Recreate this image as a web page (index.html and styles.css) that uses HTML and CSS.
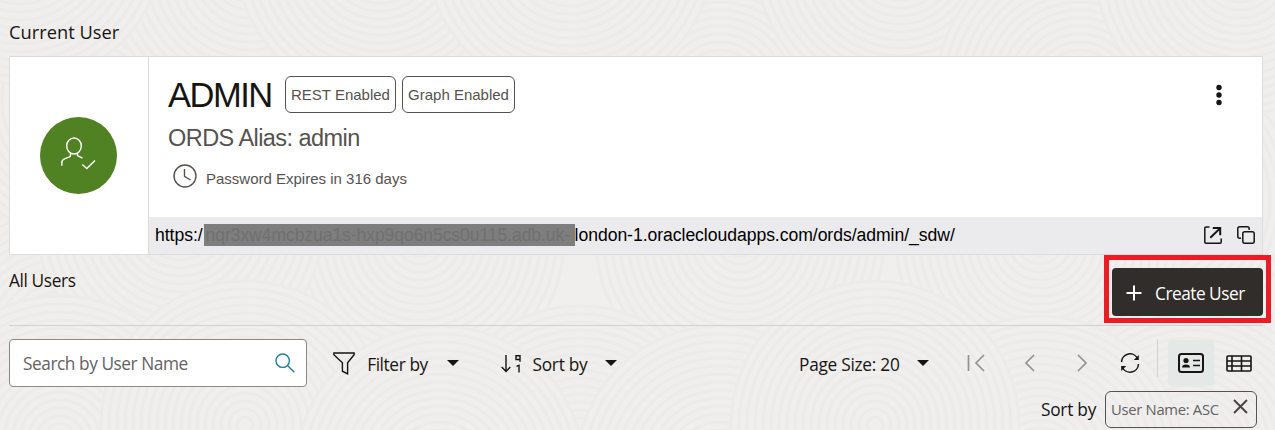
FILE: index.html
```html
<!DOCTYPE html>
<html lang="en">
<head>
<meta charset="utf-8">
<title>Database Users</title>
<link rel="stylesheet" href="styles.css">
</head>
<body>
<svg class="texture" viewBox="0 0 1275 430" aria-hidden="true">
  <defs>
    <g id="swirl" fill="#f0efee" stroke="#ecebe9" stroke-width="3">
      <circle r="144"/><circle r="136"/><circle r="128"/><circle r="120"/><circle r="112"/><circle r="104"/><circle r="96"/><circle r="88"/><circle r="80"/><circle r="72"/><circle r="64"/><circle r="56"/><circle r="48"/><circle r="40"/><circle r="32"/><circle r="24"/><circle r="16"/><circle r="8"/>
    </g>
  </defs>
  <use href="#swirl" x="60" y="340"/><use href="#swirl" x="1150" y="200"/><use href="#swirl" x="1040" y="240"/><use href="#swirl" x="740" y="240"/><use href="#swirl" x="420" y="240"/><use href="#swirl" x="180" y="220"/><use href="#swirl" x="580" y="450"/>
  <use href="#swirl" x="90" y="100"/><use href="#swirl" x="250" y="-30"/><use href="#swirl" x="380" y="-45"/><use href="#swirl" x="720" y="90"/><use href="#swirl" x="570" y="-50"/><use href="#swirl" x="900" y="-40"/><use href="#swirl" x="1080" y="90"/><use href="#swirl" x="1240" y="-30"/><use href="#swirl" x="20" y="-60"/>
  <use href="#swirl" x="60" y="440"/><use href="#swirl" x="245" y="425"/><use href="#swirl" x="440" y="470"/><use href="#swirl" x="720" y="470"/><use href="#swirl" x="1190" y="450"/><use href="#swirl" x="1040" y="460"/><use href="#swirl" x="875" y="425"/>
</svg>
<main class="page">
  <h2 class="section-title current"><span class="t-current">Current User</span></h2>
  <section class="card">
    <div class="avatar-cell">
      <div class="avatar">
        <svg width="77" height="77" viewBox="0 0 77 77" fill="none" stroke="#fff" stroke-width="1.4"><ellipse cx="34" cy="29" rx="7.3" ry="8"/><path d="M30.5 36.5v2q0 1-1 1.4l-5 2q-2.700 1.100-2.700 4v2.800M37.500 36.500v2l5 2.700"/><path d="M42.300 47.500l4.500 4 8.200-8"/></svg>
      </div>
    </div>
    <div class="detail">
      <div class="info">
        <div class="name-row">
          <h1 class="name">ADMIN</h1>
          <span class="tag rest">REST Enabled</span>
          <span class="tag graph">Graph Enabled</span>
          <button class="more" aria-label="Actions"><svg width="8" height="22" viewBox="0 0 8 22" fill="#161513"><circle cx="4" cy="3.500" r="2.700"/><circle cx="4" cy="11" r="2.700"/><circle cx="4" cy="18.500" r="2.700"/></svg></button>
        </div>
        <div class="alias">ORDS Alias: admin</div>
        <div class="expiry"><svg width="24" height="24" viewBox="0 0 24 24" fill="none" stroke="#55524f" stroke-width="1.400"><circle cx="12" cy="12" r="11"/><path d="M11.500 5v7.300l6 3.700"/></svg><span>Password Expires in 316 days</span></div>
      </div>
      <div class="url-bar">
        <span class="url">https:/<span class="redacted">nqr3xw4mcbzua1s-hxp9qo6n5cs0u115.adb.uk-</span>london-1.oraclecloudapps.com/ords/admin/_sdw/</span>
        <svg width="18" height="18" viewBox="0 0 18 18" fill="none" stroke="#161513" stroke-width="1.500"><path d="M5.500.9H2Q.8.900.8 2v14q0 1.200 1.200 1.200h14q1.200 0 1.200-1.200v-3.500"/><path d="M6.300 11.700 16 2.400M8.800 2H16.200V9.300" stroke-width="2"/></svg>
        <svg width="18" height="18" viewBox="0 0 18 18" fill="none" stroke="#161513" stroke-width="1.500"><path d="M4 12.200H2.800Q.8 12.200.8 10.200V2.800Q.8.800 2.800.8h7.400q2 0 2 2V4"/><rect x="5.800" y="5.800" width="11.400" height="11.400" rx="2"/></svg>
      </div>
    </div>
  </section>
  <section class="users-head">
    <h2 class="section-title"><span class="t-all">All Users</span></h2>
    <div class="highlight"><button class="create"><svg width="16" height="16" viewBox="0 0 16 16" stroke="#fff" stroke-width="2"><path d="M8 .5v15M.5 8h15"/></svg><span class="t-create">Create User</span></button></div>
  </section>
  <section class="toolbar">
    <div class="search"><span class="t-search">Search by User Name</span><svg width="20" height="20" viewBox="0 0 20 20" fill="none" stroke="#227e9e" stroke-width="1.400"><circle cx="7.700" cy="7.700" r="6.700"/><path d="M12.500 12.500l6.800 6.800"/></svg></div>
    <button class="menu filter"><svg width="22" height="23" viewBox="0 0 22 23" fill="none" stroke="#161513" stroke-width="1.400"><path d="M.9 1h20.200v1.700l-6.500 8.100v11.100l-5.200-2.700v-8.400L.9 2.700z"/></svg><span class="t-filter">Filter by</span><i class="caret"></i></button>
    <button class="menu sort"><svg width="20" height="19" viewBox="0 0 20 19" fill="none" stroke="#161513" stroke-width="1.400"><path d="M5 1v16.500M.7 13 5 17.500 9.300 13"/><path d="M19 7.800V1.700h-4v3.800h4M15.500 12.400l2.500-1v7.200" stroke-width="1.400"/></svg><span class="t-sort">Sort by</span><i class="caret"></i></button>
    <div class="menu size"><span class="t-size">Page Size: 20</span><i class="caret"></i></div>
    <div class="pager">
      <svg class="first" width="18" height="18" viewBox="0 0 18 18" fill="none" stroke="#949290" stroke-width="1.700"><path d="M1.500 1v16M17 1 9 9l8 8"/></svg>
      <svg class="prev" width="11" height="18" viewBox="0 0 11 18" fill="none" stroke="#949290" stroke-width="1.700"><path d="M10 1 2 9l8 8"/></svg>
      <svg class="next" width="11" height="18" viewBox="0 0 11 18" fill="none" stroke="#949290" stroke-width="1.700"><path d="M1 1l8 8-8 8"/></svg>
      <svg class="refresh" width="20" height="20" viewBox="0 0 20 20" fill="none" stroke="#161513" stroke-width="1.500"><path d="M1.500 9A8.500 8.500 0 0 1 17.800 6M18.500 11A8.500 8.500 0 0 1 2.200 14"/><path d="M18.800 2v5h-5zM1.200 18v-5h5z" fill="#161513" stroke="none"/></svg>
    </div>
    <div class="views">
      <span class="view active"><svg width="26" height="20" viewBox="0 0 26 20" fill="none" stroke="#161513" stroke-width="2"><rect x="1" y="1" width="24" height="18" rx="2.500"/><circle cx="8" cy="7.500" r="2.600" fill="#161513" stroke="none"/><path d="M4 14.500q0-3 4-3t4 3z" fill="#161513" stroke="none"/><path d="M15 7.500h7M15 12.500h7" stroke-width="1.500"/></svg></span>
      <span class="view"><svg width="26" height="17" viewBox="0 0 26 17" fill="none" stroke="#161513" stroke-width="1.600"><rect x="1" y="1" width="24" height="15" rx="1"/><path d="M1 6h24M1 11h24M6 1v15M15.500 1v15"/></svg></span>
    </div>
  </section>
  <div class="sort-row"><span class="t-sort">Sort by</span><span class="chip"><span class="t-chip">User Name: ASC</span><svg width="15" height="15" viewBox="0 0 15 15" stroke="#494643" stroke-width="2"><path d="M1 1l13 13M14 1 1 14"/></svg></span></div>
</main>
</body>
</html>
```
FILE: styles.css
```css
* { box-sizing: border-box; }
html, body { margin: 0; height: 430px; overflow: hidden; }
body { background: #f0efee; color: #161513; font: 17.3px/24px "Open Sans", "Noto Sans", sans-serif; }
button { font: inherit; color: inherit; border: 0; background: none; padding: 0; }
svg { display: block; flex: none; }
.texture { position: absolute; left: 0; top: 0; width: 1275px; height: 430px; z-index: -1; }
.page { width: 1263px; padding-left: 9px; }
.section-title { margin: 0; font-size: 17.3px; font-weight: 400; white-space: nowrap; }
.current { height: 56px; padding-top: 20px; font-size: 18.3px; }
.card { display: flex; height: 199px; border: 1px solid #dddcdb; background: #fff; font-family: "Liberation Sans", Arial, sans-serif; }
.avatar-cell { width: 139px; padding-right: 1px; border-right: 1px solid #dddcdb; display: flex; align-items: center; justify-content: center; }
.avatar { width: 77px; height: 77px; border-radius: 50%; background: #508223; }
.detail { flex: 1; display: flex; flex-direction: column; }
.info { height: 160px; padding: 19px 39px 0 19px; color: #55524f; }
.name-row { display: flex; height: 37px; align-items: center; }
.name { margin: 0; width: 117px; color: #161513; font-size: 34.5px; line-height: 38px; font-weight: 400; letter-spacing: -1.5px; }
.tag { height: 37px; border: 1px solid #55524f; border-radius: 6px; font-size: 15px; line-height: 35px; text-align: center; white-space: nowrap; }
.rest { width: 111px; }
.graph { width: 113px; margin-left: 6px; }
.more { margin-left: auto; }
.alias { margin-top: 10px; font-size: 23.5px; line-height: 30px; letter-spacing: -.55px; white-space: nowrap; }
.expiry { display: flex; align-items: center; gap: 9px; margin: 11px 0 0 5px; font-size: 15px; line-height: 24px; }
.expiry span { padding-top: 6px; line-height: 18px; }
.url-bar { display: flex; align-items: center; height: 37px; padding: 0 7px 1px 6px; background: #ebebed; gap: 15px; }
.url { flex: 1; font-size: 17.6px; line-height: 22px; letter-spacing: -.05px; color: #000; white-space: nowrap; }
.redacted { display: inline-block; width: 371px; height: 22px; margin-left: 1px; padding-left: 2px; vertical-align: top; background: #7e7e7e; color: #707070; letter-spacing: -.1px; }
.users-head { display: flex; justify-content: space-between; height: 71px; border-bottom: 1px solid #d2d1cf; }
.users-head .section-title { padding-top: 14px; }
.highlight { width: 167px; height: 68px; margin-right: -8px; border: 5px solid #ed1c24; padding: 8px 3px 7px; }
.create { display: flex; align-items: center; gap: 13px; width: 151px; height: 48px; padding: 1px 0 0 14px; border-radius: 4px; background: #312d2a; color: #fff; }
.create span { padding-top: 2px; }
.toolbar { display: flex; align-items: center; height: 61px; padding-top: 13px; }
.toolbar > * { flex: none; height: 48px; }
.search { width: 298px; display: flex; align-items: center; justify-content: space-between; padding: 0 11px 1px 13px; border: 1px solid #8b8885; border-radius: 4px; background: #fff; color: #65625f; }
.search span { padding-top: 3px; }
.menu { display: flex; align-items: center; color: #161513; white-space: nowrap; }
.menu span { padding-top: 4px; }
.caret { border: 6px solid transparent; border-top-color: #161513; border-bottom: 0; }
.filter { width: 126px; margin-left: 26px; }
.filter .t-filter { margin: 0 18px 0 11px; }
.sort { width: 116px; margin-left: 42px; }
.sort .t-sort { margin: 0 17px 0 11px; }
.size { width: 130px; margin-left: 182px; justify-content: space-between; }
.pager { display: flex; align-items: center; width: 191px; height: 38px; margin: 0 0 10px 38px; padding-top: 10px; border-right: 1px solid #d2d1cf; }
.prev { margin-left: 39px; }
.next { margin-left: 42px; }
.refresh { margin-left: 32px; }
.views { display: flex; margin-left: 10px; height: 46px; }
.view { width: 46px; height: 46px; display: flex; align-items: center; justify-content: center; }
.view + .view { margin-left: 2px; }
.active { background: #e4e8e7; border-radius: 4px; }
.sort-row { display: flex; justify-content: flex-end; align-items: center; gap: 8px; height: 36px; margin: 4px 6px 0 0; }
.sort-row .t-sort { padding-top: 2px; }
.chip { display: flex; align-items: center; justify-content: space-between; width: 152px; height: 37px; padding: 0 8px 0 5px; border: 1px solid #55524f; border-radius: 6px; color: #65625f; font-size: 14.800px; }
.chip svg { margin-bottom: 5px; }
.section-title span, .create span, .search span, .menu span, .sort-row .t-sort, .t-chip { display: block; white-space: nowrap; }
.t-current { width: 111px; }
.t-all { letter-spacing: -.38px; }
.t-create { width: 91px; text-align: left; letter-spacing: -.5px; }
.t-search { width: 166px; letter-spacing: -.45px; }
.t-filter { width: 63px; letter-spacing: -.4px; }
.t-sort { width: 56px; letter-spacing: -.25px; }
.t-size { width: 102px; letter-spacing: -.27px; }
.t-chip { width: 108px; letter-spacing: -.3px; }
```
